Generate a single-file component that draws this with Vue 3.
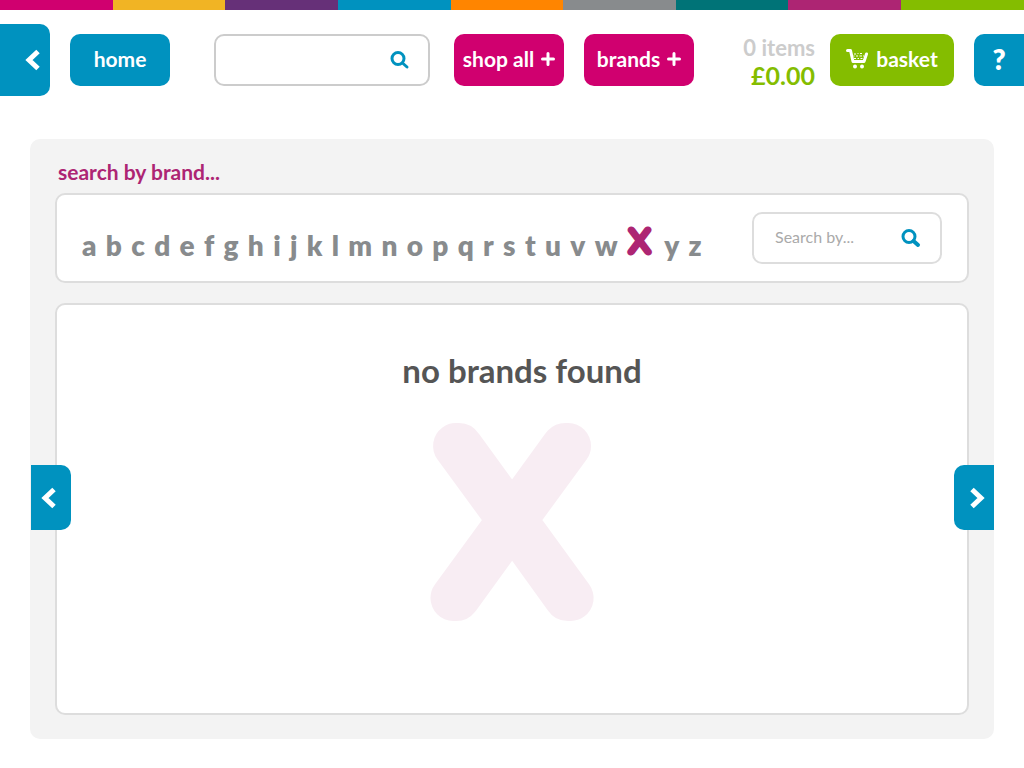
<script setup>
import { ref } from 'vue'

const stripes = ['pink', 'yellow', 'purple', 'blue', 'orange', 'grey', 'teal', 'plum', 'green']
const letters = 'abcdefghijklmnopqrstuvwxyz'.split('')
const selected = ref('x')
const query = ref('')
const brandQuery = ref('')
</script>

<template>
  <div class="page">
    <div class="stripes" aria-hidden="true">
      <span v-for="s in stripes" :key="s" :class="s"></span>
    </div>

    <header class="header">
      <button class="back" type="button" aria-label="back">
        <svg class="chevron" viewBox="0 0 16 22"><path d="M13 2.500 4 11l9 8.500" /></svg>
      </button>
      <a class="btn home" href="#">home</a>
      <form class="search main-search" @submit.prevent>
        <input v-model="query" type="text" aria-label="search products" />
        <button type="submit" aria-label="search">
          <svg class="glass" viewBox="0 0 20 20"><circle cx="8" cy="8.500" r="6" /><path d="m12.500 13 4.500 4" /></svg>
        </button>
      </form>
      <button class="btn menu shop" type="button">
        shop all
        <svg class="plus" viewBox="0 0 14 14"><path d="M7 1.500v11M1.500 7h11" /></svg>
      </button>
      <button class="btn menu" type="button">
        brands
        <svg class="plus" viewBox="0 0 14 14"><path d="M7 1.500v11M1.500 7h11" /></svg>
      </button>
      <div class="summary">
        <span class="count">0 items</span>
        <span class="total">£0.00</span>
      </div>
      <a class="btn basket" href="#">
        <svg class="cart" viewBox="0 0 22 20">
          <path class="line" d="M1.500 1.500h3l2.500 11h11L20.500 5" />
          <path class="load" d="M8 5h2M11.500 4.500h1M14 4.500h2M7.500 7h1M10 7h2M13.500 7h2.500M17 7h1M8 9.500h2M11.500 9.500h1.500M14.500 9.500h2" />
          <circle cx="9" cy="17.500" r="2" /><circle cx="16" cy="17.500" r="2" />
        </svg>
        basket
      </a>
      <button class="help" type="button">?</button>
    </header>

    <main class="panel">
      <h1>search by brand...</h1>
      <section class="box filter">
        <nav class="letters" aria-label="brands by letter">
          <a v-for="l in letters" :key="l" href="#" :class="{ active: l === selected }" @click.prevent="selected = l">
            <svg v-if="l === selected" class="mark" viewBox="0 0 164 198">
              <text x="82" y="174" text-anchor="middle">{{ l.toUpperCase() }}</text>
            </svg>
            <template v-else>{{ l }}</template>
          </a>
        </nav>
        <form class="search brand-search" @submit.prevent>
          <input v-model="brandQuery" type="text" placeholder="Search by..." aria-label="search brands" />
          <button type="submit" aria-label="search">
            <svg class="glass" viewBox="0 0 20 20"><circle cx="8" cy="8.500" r="6" /><path class="handle" d="m12.500 13 4.500 4" /></svg>
          </button>
        </form>
      </section>

      <section class="box results">
        <h2>no brands found</h2>
        <svg class="watermark mark" viewBox="0 0 164 198">
          <text x="82" y="174" text-anchor="middle">{{ selected.toUpperCase() }}</text>
        </svg>
        <button class="pager prev" type="button" aria-label="previous">
          <svg class="chevron" viewBox="0 0 16 22"><path d="M13 2.500 4 11l9 8.500" /></svg>
        </button>
        <button class="pager next" type="button" aria-label="next">
          <svg class="chevron" viewBox="0 0 16 22"><path d="m3 2.500 9 8.500-9 8.500" /></svg>
        </button>
      </section>
    </main>
  </div>
</template>

<style>
body { margin: 0; background: #fff; }
</style>

<style scoped>
.page, .page * { box-sizing: border-box; }
.page { font-family: Lato, "Open Sans", sans-serif; font-weight: 700; }
button, input { font: inherit; border: 0; padding: 0; margin: 0; background: none; }
button { cursor: pointer; }
a { text-decoration: none; color: inherit; }
svg { display: block; flex: none; }

.stripes { display: grid; grid-template-columns: repeat(8, 11fr) 12fr; height: 10px; }
.pink { background: #d0006f; }
.yellow { background: #f1b424; }
.purple { background: #663078; }
.blue { background: #0092bf; }
.orange { background: #ff8500; }
.grey { background: #888b8d; }
.teal { background: #007377; }
.plum { background: #ad2573; }
.green { background: #84bd00; }

.header { display: flex; align-items: center; padding-top: 14px; }
.header > * { flex: none; }
.back { display: flex; align-items: center; justify-content: flex-end; width: 50px; height: 72px; padding-right: 9px; border-radius: 0 10px 10px 0; background: #0092bf; }
.chevron { width: 16px; height: 22px; fill: none; stroke: #fff; stroke-width: 5; }
.btn, .help { display: flex; align-items: center; justify-content: center; height: 52px; padding-bottom: 2px; border-radius: 10px; color: #fff; font-size: 21px; line-height: 24px; white-space: nowrap; }
.home { width: 100px; margin-left: 20px; background: #0092bf; }
.search { display: flex; align-items: center; height: 52px; border: 2px solid #ccc; border-radius: 10px; background: #fff; }
.search input { flex: 1; min-width: 0; height: 100%; outline: none; color: #555; font-size: 16px; font-weight: 400; padding: 0 0 4px 21px; }
.search input::placeholder { color: #aaa; opacity: 1; }
.header .main-search { flex: 1; min-width: 0; margin: 0 24px 0 44px; padding-right: 18px; }
.glass { width: 20px; height: 20px; fill: none; stroke: #0092bf; stroke-width: 3; stroke-linecap: round; }
.menu { width: 110px; gap: 7px; background: #d0006f; }
.shop { margin-right: 20px; }
.plus { width: 14px; height: 14px; fill: none; stroke: #fff; stroke-width: 3; stroke-linecap: round; }
.summary { display: flex; flex-direction: column; width: 121px; padding-top: 3px; text-align: right; }
.count { color: #ccc; font-size: 22px; line-height: 26px; }
.total { color: #84bd00; font-size: 25px; line-height: 28px; }
.basket { width: 124px; gap: 8px; margin: 0 20px 0 15px; background: #84bd00; }
.cart { width: 22px; height: 20px; fill: #fff; }
.cart .line { fill: none; stroke: #fff; stroke-width: 3; stroke-linecap: round; stroke-linejoin: round; }
.cart .load { fill: none; stroke: #fff; stroke-width: 1; }
.help { width: 50px; border-radius: 10px 0 0 10px; background: #0092bf; font-size: 28px; font-weight: 800; }

.panel { margin: 43px 30px 29px; padding: 21px 25px 24px; border-radius: 10px; background: #f3f3f3; }
h1 { margin: 0 0 9px 3px; color: #ad2573; font-size: 21px; font-weight: inherit; line-height: 24px; }
.box { border: 2px solid #ddd; border-radius: 10px; background: #fff; }
.filter { display: flex; align-items: center; justify-content: space-between; min-height: 90px; padding: 0 25px; }
.letters { display: flex; align-items: baseline; justify-content: space-between; flex: 1; margin-right: 50px; padding-top: 12px; color: #888b8d; font-size: 28px; font-weight: 800; line-height: 34px; }
.letters .mark { width: 25px; height: 30px; margin-right: 3px; fill: #ad2573; stroke: #ad2573; }
.mark text { font-family: Lato, sans-serif; font-size: 216px; font-weight: 100; stroke-width: 46px; stroke-linejoin: round; }
.mark { overflow: visible; }
.brand-search { width: 190px; border-color: #ddd; padding-right: 19px; }
.handle { stroke-width: 4; }
.results { position: relative; display: flex; flex-direction: column; align-items: center; min-height: 412px; margin-top: 20px; padding-top: 45px; }
h2 { margin: 0 0 34px; padding-left: 20px; color: #555; font-size: 33px; font-weight: inherit; line-height: 40px; }
.watermark { width: 164px; height: 198px; fill: #f8edf3; stroke: #f8edf3; }
.pager { position: absolute; top: 160px; display: flex; align-items: center; justify-content: center; width: 40px; height: 65px; background: #0092bf; }
.prev { left: -26px; border-radius: 0 10px 10px 0; padding-right: 5px; }
.next { right: -27px; border-radius: 10px 0 0 10px; padding-left: 5px; }
</style>
